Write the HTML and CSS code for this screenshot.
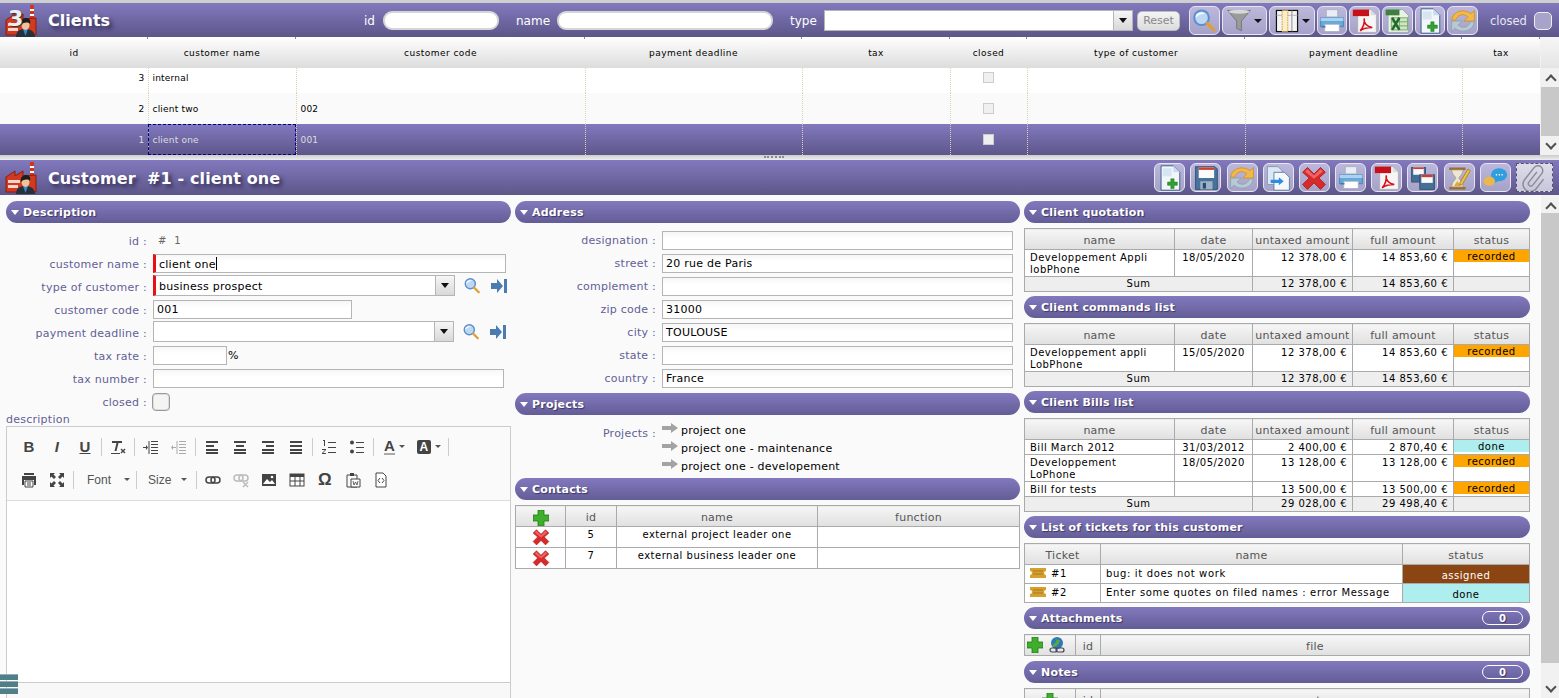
FILE: index.html
```html
<!DOCTYPE html>
<html lang="en">
<head>
  <meta charset="UTF-8" />
  <title>Clients</title>
  <link rel="stylesheet" href="styles.css">
</head>
<body>

<svg class="defs" xmlns="http://www.w3.org/2000/svg">
  <symbol id="i-factory" viewBox="0 0 32 32">
    <rect x="25" y="0" width="4" height="18" fill="#d8321f"/>
    <rect x="25" y="4" width="4" height="2" fill="#fff"/>
    <rect x="25" y="9" width="4" height="2" fill="#fff"/>
    <path d="M1 15l9-6v5l8-5v5l13-1v17H1z" fill="#cf3a22" stroke="#8e1d0e"/>
    <path d="M3 18h12v3H3zM3 23h10v3H3z" fill="#f6d4c8"/>
    <path d="M11 32c0-6 4-8 9-8s10 2 10 8z" fill="#24303c"/>
    <path d="M18 24l2.500 7 2.500-7z" fill="#3c86c8"/>
    <ellipse cx="20.500" cy="20" rx="4" ry="5" fill="#eec29c"/>
    <path d="M16 20c-1-5 2-7 5-7s5 2 4 6c-2-2-6-2-9 1z" fill="#1d1d1d"/>
  </symbol>
  <symbol id="i-search" viewBox="0 0 32 32">
    <circle cx="13" cy="12" r="9" fill="#bcd8f2" stroke="#5b8fd0" stroke-width="2.500"/>
    <path d="M6 9c3-4 8-4 11-2-4 0-8 1-11 5z" fill="#fff"/>
    <path d="M20 19l8 8" stroke="#e0a030" stroke-width="4" stroke-linecap="round"/>
  </symbol>
  <symbol id="i-funnel" viewBox="0 0 32 32">
    <path d="M2 3h28L19 16v12l-6-3v-9z" fill="#9a9a9a" stroke="#6f6f6f"/>
    <ellipse cx="16" cy="4.500" rx="13" ry="2.500" fill="#d8d8d8"/>
  </symbol>
  <symbol id="i-cols" viewBox="0 0 32 32">
    <rect x="3" y="3" width="26" height="26" fill="#f4f4f4" stroke="#111" stroke-width="1.500"/>
    <path d="M22 3v26" stroke="#777"/>
    <path d="M3 9h26" stroke="#aaa"/>
    <rect x="10" y="3" width="7" height="26" fill="#fbeecb" stroke="#d08a18" stroke-dasharray="2 1"/>
  </symbol>
  <symbol id="i-print" viewBox="0 0 32 32">
    <path d="M9 2h14v9H9z" fill="#e8eef4" stroke="#aab"/>
    <path d="M2 12h28v11H2z" fill="#67a9da" stroke="#3f7fb2"/>
    <path d="M2 12h28v4H2z" fill="#a9d3ef"/>
    <path d="M7 20h18v9H7z" fill="#fff" stroke="#aab"/>
    <path d="M3 24h5v-2H3z" fill="#3f7fb2"/>
  </symbol>
  <symbol id="i-pdf" viewBox="0 0 32 32">
    <path d="M7 2h16l7 7v21H7z" fill="#f6f6f6" stroke="#aaa"/>
    <path d="M23 2v7h7z" fill="#ddd"/>
    <rect x="1" y="2" width="20" height="8" fill="#c8101a"/>
    <path d="M10 28c4-4 6-11 5-15-1 5 3 10 10 11-6 0-11 1-15 4z" fill="none" stroke="#d8101a" stroke-width="2"/>
  </symbol>
  <symbol id="i-excel" viewBox="0 0 32 32">
    <path d="M5 2h18l7 7v21H5z" fill="#e9f2e4" stroke="#8aa"/>
    <rect x="2" y="2" width="17" height="7" fill="#3f7f3f"/>
    <path d="M9 12h20v15H9zM9 17h20M9 22h20M19 12v15" fill="#cfe5c3" stroke="#6a9d5c"/>
    <path d="M10 12l9 15M19 12l-9 15" stroke="#1f6a2c" stroke-width="3"/>
  </symbol>
  <symbol id="i-new" viewBox="0 0 32 32">
    <path d="M5 1h15l8 8v22H5z" fill="#f2f6fb" stroke="#1f4a78"/>
    <path d="M20 1v8h8z" fill="#c9dbee"/>
    <path d="M7 4h11v10H7z" fill="#d9e4f2"/>
    <path d="M17 17h4v4h4v4h-4v4h-4v-4h-4v-4h4z" fill="#2fa32f" stroke="#1c6e1c" stroke-width=".6"/>
  </symbol>
  <symbol id="i-refresh" viewBox="0 0 32 32">
    <path d="M2 15C3 4 17 0 26 7l4-4v13H17l5-5c-5-5-13-3-15 4z" fill="#f2b94a" stroke="#d08f1f"/>
    <path d="M30 17c-1 11-15 15-24 8l-4 4V16h13l-5 5c5 5 13 3 15-4z" fill="#b8c8d4" stroke="#8da0ae"/>
  </symbol>
  <symbol id="i-save" viewBox="0 0 32 32">
    <path d="M3 2h24l3 3v25H3z" fill="#48729a" stroke="#2c4c6c"/>
    <rect x="7" y="3" width="19" height="13" fill="#fafafa"/>
    <rect x="7" y="3" width="19" height="3" fill="#d23b30"/>
    <rect x="9" y="20" width="15" height="10" fill="#9fb3c6"/>
    <rect x="12" y="22" width="4" height="7" fill="#2c4c6c"/>
  </symbol>
  <symbol id="i-copy" viewBox="0 0 32 32">
    <path d="M3 2h13l5 5v17H3z" fill="#dce8f4" stroke="#7a92ad"/>
    <path d="M11 9h13l6 6v16H11z" fill="#f6f9fc" stroke="#4c6e96"/>
    <path d="M7 18h10v-3l6 5-6 5v-3H7z" fill="#2a8fe0"/>
  </symbol>
  <symbol id="i-del" viewBox="0 0 32 32">
    <path d="M8 3l8 8 8-8 6 6-8 7 8 8-6 6-8-8-8 8-6-6 8-8-8-7z" fill="#d92a2a" stroke="#a81818"/>
    <path d="M8 5l8 8 8-8 3 3-11 9-11-9z" fill="#ee6464"/>
  </symbol>
  <symbol id="i-multi" viewBox="0 0 32 32">
    <rect x="2" y="3" width="17" height="18" fill="#476f96" stroke="#2c4c6c"/>
    <rect x="4" y="3" width="13" height="9" fill="#fafafa"/>
    <rect x="4" y="3" width="13" height="2" fill="#d23b30"/>
    <rect x="12" y="12" width="18" height="18" fill="#476f96" stroke="#2c4c6c"/>
    <rect x="14" y="12" width="14" height="10" fill="#fafafa"/>
    <rect x="14" y="12" width="14" height="3" fill="#d23b30"/>
  </symbol>
  <symbol id="i-glass" viewBox="0 0 32 32">
    <path d="M4 3h20v3H4zM4 27h20v3H4z" fill="#a06a2a"/>
    <path d="M7 6h14c0 6-5 8-5 10s5 4 5 11H7c0-7 5-9 5-11S7 12 7 6z" fill="#efe6d2" stroke="#998"/>
    <path d="M10 26c1-3 4-5 4-7 0 2 3 4 4 7z" fill="#d8a84a"/>
    <path d="M27 5l3 2-10 17-3 1 0-3z" fill="#f0c040" stroke="#a87a1a"/>
  </symbol>
  <symbol id="i-chat" viewBox="0 0 32 32">
    <ellipse cx="21" cy="12" rx="10" ry="8" fill="#2f9ede"/>
    <path d="M15 18l-2 5 7-3z" fill="#2f9ede"/>
    <ellipse cx="9" cy="20" rx="7" ry="5.500" fill="#eeb74c"/>
    <path d="M17 12h1.500M20.500 12h1.500M24 12h1.500" stroke="#fff" stroke-width="2"/>
  </symbol>
  <symbol id="i-clip" viewBox="0 0 32 32">
    <path d="M-2-8V8a3 3 0 006 0V-10a6 6 0 00-12 0V9a9 9 0 0018 0V-6" transform="translate(15 16) rotate(38)" fill="none" stroke="#8c8c96" stroke-width="1.800"/>
  </symbol>
  <symbol id="i-goto" viewBox="0 0 16 14">
    <path d="M0 4h6V0l6 7-6 7v-4H0z" fill="#4a7cb0"/>
    <rect x="13" y="0" width="3" height="14" fill="#4a7cb0"/>
  </symbol>
  <symbol id="i-arrow" viewBox="0 0 16 10">
    <path d="M0 3h9V0l7 5-7 5V7H0z" fill="#a3a3a3"/>
  </symbol>
  <symbol id="i-plus" viewBox="0 0 16 16">
    <path d="M5 0h6v5h5v6h-5v5H5v-5H0V5h5z" fill="#3fae2a" stroke="#1f7a18" stroke-width=".8"/>
  </symbol>
  <symbol id="i-ticket" viewBox="0 0 16 10">
    <path d="M0 0h16v3a2 2 0 000 4v3H0V7a2 2 0 000-4z" fill="#d5a02e"/>
    <path d="M3 3h10M3 6h10" stroke="#a97a1c"/>
  </symbol>
  <symbol id="i-globe" viewBox="0 0 16 16">
    <circle cx="8" cy="6" r="6" fill="#2d78b8"/>
    <path d="M5 2c3 0 3 3 1 4S3 8 4 10c4 0 6-3 7-7z" fill="#5aa83c"/>
    <rect x="1" y="11" width="7" height="4" rx="2" fill="none" stroke="#445" stroke-width="1.200"/>
    <rect x="7" y="11" width="8" height="4" rx="2" fill="none" stroke="#445" stroke-width="1.200"/>
  </symbol>
  <symbol id="e-clear" viewBox="0 0 16 16">
    <path d="M2 2h10v2H8.500L6.500 12H4.500L6.500 4H2zM1 14h9v1H1z" fill="#444"/>
    <path d="M11 10l4 4M15 10l-4 4" stroke="#444" stroke-width="1.400"/>
  </symbol>
  <symbol id="e-indent" viewBox="0 0 16 16">
    <path d="M8 2h7v1H8zM8 5h7v1H8zM8 8h7v1H8zM8 11h7v1H8zM8 14h7v1H8z" fill="#444"/>
    <path d="M6 2v13" stroke="#444"/>
    <path d="M0 8h3V6l2 2.500L3 11V9H0z" fill="#444"/>
  </symbol>
  <symbol id="e-outdent" viewBox="0 0 16 16">
    <path d="M8 2h7v1H8zM8 5h7v1H8zM8 8h7v1H8zM8 11h7v1H8zM8 14h7v1H8z" fill="#aaa"/>
    <path d="M6 2v13" stroke="#aaa"/>
    <path d="M5 8H2V6L0 8.500 2 11V9h3z" fill="#aaa"/>
  </symbol>
  <symbol id="e-left" viewBox="0 0 16 16"><path d="M2 2h12v2H2zM2 6h8v2H2zM2 10h12v2H2zM2 13h12v2H2z" fill="#444"/></symbol>
  <symbol id="e-center" viewBox="0 0 16 16"><path d="M2 2h12v2H2zM4 6h8v2H4zM2 10h12v2H2zM2 13h12v2H2z" fill="#444"/></symbol>
  <symbol id="e-right" viewBox="0 0 16 16"><path d="M2 2h12v2H2zM6 6h8v2H6zM2 10h12v2H2zM2 13h12v2H2z" fill="#444"/></symbol>
  <symbol id="e-just" viewBox="0 0 16 16"><path d="M2 2h12v2H2zM2 6h12v2H2zM2 10h12v2H2zM2 13h12v2H2z" fill="#444"/></symbol>
  <symbol id="e-ol" viewBox="0 0 16 16">
    <path d="M7 3h8v1H7zM7 8h8v1H7zM7 13h8v1H7z" fill="#444"/>
    <path d="M2 1h2v6H3V2H2zM1 10h4v1L2 14h3v1H1v-1l3-3H1z" fill="#444"/>
  </symbol>
  <symbol id="e-ul" viewBox="0 0 16 16">
    <path d="M7 3h8v1H7zM7 8h8v1H7zM7 13h8v1H7z" fill="#444"/>
    <circle cx="3" cy="3.500" r="2" fill="#444"/><circle cx="3" cy="12.500" r="2" fill="#444"/>
  </symbol>
  <symbol id="e-print" viewBox="0 0 16 16">
    <path d="M3 1h10v2H3zM1 4h14v9h-2V8H3v5H1z" fill="#444"/>
    <path d="M4 9h8v6H4zM6 11h4M6 13h4" fill="#fff" stroke="#444"/>
  </symbol>
  <symbol id="e-max" viewBox="0 0 16 16">
    <path d="M1 1h5L4.500 2.500 7 5 5 7 2.500 4.500 1 6zM15 1v5L13.500 4.500 11 7 9 5l2.500-2.500L10 1zM1 15v-5l1.500 1.500L5 9l2 2-2.500 2.500L6 15zM15 15h-5l1.500-1.500L9 11l2-2 2.500 2.500L15 10z" fill="#444"/>
  </symbol>
  <symbol id="e-link" viewBox="0 0 16 16">
    <rect x="1" y="5" width="9" height="6" rx="3" fill="none" stroke="#444" stroke-width="1.500"/>
    <rect x="6" y="5" width="9" height="6" rx="3" fill="none" stroke="#444" stroke-width="1.500"/>
  </symbol>
  <symbol id="e-unlink" viewBox="0 0 16 16">
    <rect x="1" y="3" width="9" height="6" rx="3" fill="none" stroke="#bbb" stroke-width="1.500"/>
    <rect x="6" y="3" width="9" height="6" rx="3" fill="none" stroke="#bbb" stroke-width="1.500"/>
    <path d="M10 10l5 5M15 10l-5 5" stroke="#bbb" stroke-width="1.500"/>
  </symbol>
  <symbol id="e-image" viewBox="0 0 16 16">
    <rect x="1" y="2" width="14" height="12" fill="#444"/>
    <path d="M2 12l4-5 3 3 2-2 3 4z" fill="#fff"/>
    <circle cx="11" cy="5" r="1.300" fill="#fff"/>
  </symbol>
  <symbol id="e-table" viewBox="0 0 16 16">
    <rect x="1" y="2" width="14" height="12" fill="#fff" stroke="#444"/>
    <path d="M1 2h14v3H1z" fill="#444"/>
    <path d="M1 9h14M6 2v12M11 2v12" stroke="#444"/>
  </symbol>
  <symbol id="e-paste" viewBox="0 0 16 16">
    <path d="M2 3h10v12H2z" fill="none" stroke="#444"/>
    <rect x="5" y="1" width="4" height="3" fill="#444"/>
    <path d="M6 7h9v8H6z" fill="#fff" stroke="#444"/>
    <path d="M8 9l1 4 1.500-3 1.500 3 1-4" fill="none" stroke="#444" stroke-width=".8"/>
  </symbol>
  <symbol id="e-source" viewBox="0 0 16 16">
    <path d="M3 1h7l3 3v11H3z" fill="#fff" stroke="#444"/>
    <path d="M7 6L5 8.500 7 11M9 6l2 2.500L9 11" fill="none" stroke="#444"/>
  </symbol>
</svg>

<header class="title-bar list-bar">
  <svg class="logo"><use href="#i-factory"/></svg>
  <span class="logo-count">3</span>
  <h1 class="title title-list">Clients</h1>

  <div class="search">
    <label class="search-id">id</label>
    <input class="pill pill-id" type="text">
    <label class="search-name">name</label>
    <input class="pill pill-name" type="text">
    <label class="search-type">type</label>
    <div class="combo combo-type"><span class="combo-text"></span><span class="combo-btn"></span></div>
    <button class="reset">Reset</button>
  </div>

  <div class="tools tools-list">
    <button class="tool"><svg><use href="#i-search"/></svg></button>
    <button class="tool tool-wide"><svg><use href="#i-funnel"/></svg><i class="caret"></i></button>
    <button class="tool tool-wide"><svg><use href="#i-cols"/></svg><i class="caret"></i></button>
    <button class="tool"><svg><use href="#i-print"/></svg></button>
    <button class="tool"><svg><use href="#i-pdf"/></svg></button>
    <button class="tool"><svg><use href="#i-excel"/></svg></button>
    <button class="tool"><svg><use href="#i-new"/></svg></button>
    <button class="tool"><svg><use href="#i-refresh"/></svg></button>
  </div>
  <span class="closed-label">closed</span>
  <span class="closed-box"></span>
</header>

<section class="grid-wrap">
  <div class="grid">
    <table>
      <colgroup>
        <col style="width:148px"><col style="width:148px"><col style="width:289px"><col style="width:217px"><col style="width:148px"><col style="width:77px"><col style="width:218px"><col style="width:217px"><col style="width:78px">
      </colgroup>
      <thead>
        <tr>
          <th>id</th><th>customer name</th><th>customer code</th><th>payment deadline</th><th>tax</th><th>closed</th><th>type of customer</th><th>payment deadline</th><th>tax</th>
        </tr>
      </thead>
      <tbody>
        <tr class="row-first">
          <td class="num">3</td><td>internal</td><td></td><td></td><td></td><td class="chk"><span></span></td><td></td><td></td><td></td>
        </tr>
        <tr class="row-even">
          <td class="num">2</td><td>client two</td><td>002</td><td></td><td></td><td class="chk"><span></span></td><td></td><td></td><td></td>
        </tr>
        <tr class="row-selected">
          <td class="num">1</td><td class="focus">client one</td><td>001</td><td></td><td></td><td class="chk"><span></span></td><td></td><td></td><td></td>
        </tr>
      </tbody>
    </table>
  </div>
  <div class="scroll scroll-grid">
    <span class="scroll-head"></span>
    <span class="scroll-up"></span>
    <span class="scroll-thumb"></span>
    <span class="scroll-down"></span>
  </div>
</section>

<div class="splitter"><span></span></div>

<header class="title-bar detail-bar">
  <svg class="logo"><use href="#i-factory"/></svg>
  <h1 class="title">Customer &nbsp;#1 - client one</h1>
  <div class="tools tools-detail">
    <button class="tool"><svg><use href="#i-new"/></svg></button>
    <button class="tool"><svg><use href="#i-save"/></svg></button>
    <button class="tool"><svg><use href="#i-refresh"/></svg></button>
    <button class="tool"><svg><use href="#i-copy"/></svg></button>
    <button class="tool"><svg><use href="#i-del"/></svg></button>
    <button class="tool"><svg><use href="#i-print"/></svg></button>
    <button class="tool"><svg><use href="#i-pdf"/></svg></button>
    <button class="tool"><svg><use href="#i-multi"/></svg></button>
    <button class="tool"><svg><use href="#i-glass"/></svg></button>
    <button class="tool"><svg><use href="#i-chat"/></svg></button>
    <button class="tool tool-attach"><svg><use href="#i-clip"/></svg></button>
  </div>
</header>

<main class="detail">
  <div class="columns">

    <div class="col">
      <div class="sec">
        <h2 class="bar">Description</h2>
        <div class="form">
          <div class="row"><label>id :</label><span class="id-val"># &nbsp;1</span></div>
          <div class="row"><label>customer name :</label><div class="field req f-name">client one<i class="cursor"></i></div></div>
          <div class="row"><label>type of customer :</label>
            <div class="combo req f-type"><span class="combo-text">business prospect</span><span class="combo-btn"></span></div>
            <svg class="mini"><use href="#i-search"/></svg><svg class="mini-go"><use href="#i-goto"/></svg>
          </div>
          <div class="row"><label>customer code :</label><div class="field f-code">001</div></div>
          <div class="row"><label>payment deadline :</label>
            <div class="combo f-deadline"><span class="combo-text"></span><span class="combo-btn"></span></div>
            <svg class="mini"><use href="#i-search"/></svg><svg class="mini-go"><use href="#i-goto"/></svg>
          </div>
          <div class="row"><label>tax rate :</label><div class="field f-rate"></div><span class="pct">%</span></div>
          <div class="row"><label>tax number :</label><div class="field f-number"></div></div>
          <div class="row"><label>closed :</label><span class="box"></span></div>
        </div>
        <div class="desc-label">description</div>
        <div class="editor">
          <div class="ed-tools">
            <div class="ed-row">
              <b class="ed-btn ed-b">B</b><i class="ed-btn ed-i">I</i><u class="ed-btn ed-u">U</u><span class="sep"></span>
              <span class="ed-btn"><svg><use href="#e-clear"/></svg></span><span class="sep"></span>
              <span class="ed-btn"><svg><use href="#e-indent"/></svg></span><span class="ed-btn"><svg><use href="#e-outdent"/></svg></span><span class="sep"></span>
              <span class="ed-btn"><svg><use href="#e-left"/></svg></span><span class="ed-btn"><svg><use href="#e-center"/></svg></span><span class="ed-btn"><svg><use href="#e-right"/></svg></span><span class="ed-btn"><svg><use href="#e-just"/></svg></span><span class="sep"></span>
              <span class="ed-btn"><svg><use href="#e-ol"/></svg></span><span class="ed-btn"><svg><use href="#e-ul"/></svg></span><span class="sep"></span>
              <span class="ed-color"><b class="ed-a">A</b><i class="caret-sm"></i></span>
              <span class="ed-color"><b class="ed-a2">A</b><i class="caret-sm"></i></span><span class="sep"></span>
            </div>
            <div class="ed-row">
              <span class="ed-btn"><svg><use href="#e-print"/></svg></span><span class="ed-btn"><svg><use href="#e-max"/></svg></span><span class="sep"></span>
              <span class="ed-drop ed-font">Font<i class="caret-sm"></i></span><span class="sep"></span>
              <span class="ed-drop ed-size">Size<i class="caret-sm"></i></span><span class="sep"></span>
              <span class="ed-btn"><svg><use href="#e-link"/></svg></span><span class="ed-btn"><svg><use href="#e-unlink"/></svg></span><span class="ed-btn"><svg><use href="#e-image"/></svg></span><span class="ed-btn"><svg><use href="#e-table"/></svg></span><span class="ed-btn ed-omega">Ω</span><span class="ed-btn"><svg><use href="#e-paste"/></svg></span><span class="ed-btn"><svg><use href="#e-source"/></svg></span>
            </div>
          </div>
          <div class="ed-body"></div>
          <div class="ed-foot"></div>
        </div>
      </div>
    </div>

    <div class="col">
      <div class="sec sec-address">
        <h2 class="bar">Address</h2>
        <div class="form">
          <div class="row"><label>designation :</label><div class="field f-addr"></div></div>
          <div class="row"><label>street :</label><div class="field f-addr">20 rue de Paris</div></div>
          <div class="row"><label>complement :</label><div class="field f-addr"></div></div>
          <div class="row"><label>zip code :</label><div class="field f-addr">31000</div></div>
          <div class="row"><label>city :</label><div class="field f-addr">TOULOUSE</div></div>
          <div class="row"><label>state :</label><div class="field f-addr"></div></div>
          <div class="row"><label>country :</label><div class="field f-addr">France</div></div>
        </div>
      </div>
      <div class="sec sec-projects">
        <h2 class="bar">Projects</h2>
        <div class="projects">
          <label>Projects :</label>
          <ul>
            <li><svg><use href="#i-arrow"/></svg>project one</li>
            <li><svg><use href="#i-arrow"/></svg>project one - maintenance</li>
            <li><svg><use href="#i-arrow"/></svg>project one - developement</li>
          </ul>
        </div>
      </div>
      <div class="sec">
        <h2 class="bar">Contacts</h2>
        <table class="tbl tbl-contacts">
          <colgroup><col style="width:50px"><col style="width:51px"><col style="width:201px"><col></colgroup>
          <tr><th><svg class="ic16"><use href="#i-plus"/></svg></th><th>id</th><th>name</th><th>function</th></tr>
          <tr><td class="c"><svg class="ic18"><use href="#i-del"/></svg></td><td class="c">5</td><td class="c">external project leader one</td><td></td></tr>
          <tr><td class="c"><svg class="ic18"><use href="#i-del"/></svg></td><td class="c">7</td><td class="c">external business leader one</td><td></td></tr>
        </table>
      </div>
    </div>

    <div class="col">
      <div class="sec">
        <h2 class="bar">Client quotation</h2>
        <table class="tbl tbl-money">
          <colgroup><col style="width:150px"><col style="width:78px"><col style="width:100px"><col style="width:101px"><col></colgroup>
          <tr><th>name</th><th>date</th><th>untaxed amount</th><th>full amount</th><th>status</th></tr>
          <tr class="two"><td>Developpement Appli<br>lobPhone</td><td class="c">18/05/2020</td><td class="r">12 378,00 €</td><td class="r">14 853,60 €</td><td class="st"><span class="recorded">recorded</span></td></tr>
          <tr class="sum"><td colspan="2">Sum</td><td class="r">12 378,00 €</td><td class="r">14 853,60 €</td><td></td></tr>
        </table>
      </div>
      <div class="sec">
        <h2 class="bar">Client commands list</h2>
        <table class="tbl tbl-money">
          <colgroup><col style="width:150px"><col style="width:78px"><col style="width:100px"><col style="width:101px"><col></colgroup>
          <tr><th>name</th><th>date</th><th>untaxed amount</th><th>full amount</th><th>status</th></tr>
          <tr class="two"><td>Developpement appli<br>LobPhone</td><td class="c">15/05/2020</td><td class="r">12 378,00 €</td><td class="r">14 853,60 €</td><td class="st"><span class="recorded">recorded</span></td></tr>
          <tr class="sum"><td colspan="2">Sum</td><td class="r">12 378,00 €</td><td class="r">14 853,60 €</td><td></td></tr>
        </table>
      </div>
      <div class="sec">
        <h2 class="bar">Client Bills list</h2>
        <table class="tbl tbl-money">
          <colgroup><col style="width:150px"><col style="width:78px"><col style="width:100px"><col style="width:101px"><col></colgroup>
          <tr><th>name</th><th>date</th><th>untaxed amount</th><th>full amount</th><th>status</th></tr>
          <tr class="one"><td>Bill March 2012</td><td class="c">31/03/2012</td><td class="r">2 400,00 €</td><td class="r">2 870,40 €</td><td class="st"><span class="done">done</span></td></tr>
          <tr class="two"><td>Developpement<br>LoPhone</td><td class="c">18/05/2020</td><td class="r">13 128,00 €</td><td class="r">13 128,00 €</td><td class="st"><span class="recorded">recorded</span></td></tr>
          <tr class="one"><td>Bill for tests</td><td></td><td class="r">13 500,00 €</td><td class="r">13 500,00 €</td><td class="st"><span class="recorded">recorded</span></td></tr>
          <tr class="sum"><td colspan="2">Sum</td><td class="r">29 028,00 €</td><td class="r">29 498,40 €</td><td></td></tr>
        </table>
      </div>
      <div class="sec">
        <h2 class="bar">List of tickets for this customer</h2>
        <table class="tbl tbl-tickets">
          <colgroup><col style="width:76px"><col style="width:302px"><col></colgroup>
          <tr><th>Ticket</th><th>name</th><th>status</th></tr>
          <tr><td class="tk"><svg><use href="#i-ticket"/></svg>#1</td><td>bug: it does not work</td><td class="state assigned">assigned</td></tr>
          <tr><td class="tk"><svg><use href="#i-ticket"/></svg>#2</td><td>Enter some quotes on filed names : error Message</td><td class="state done">done</td></tr>
        </table>
      </div>
      <div class="sec sec-attach">
        <h2 class="bar">Attachments<span class="count">0</span></h2>
        <table class="tbl tbl-attach">
          <colgroup><col style="width:51px"><col style="width:25px"><col></colgroup>
          <tr><th class="adds"><svg class="ic16"><use href="#i-plus"/></svg><svg class="ic16"><use href="#i-globe"/></svg></th><th>id</th><th>file</th></tr>
        </table>
      </div>
      <div class="sec">
        <h2 class="bar">Notes<span class="count">0</span></h2>
        <table class="tbl tbl-attach">
          <colgroup><col style="width:51px"><col style="width:25px"><col></colgroup>
          <tr><th><svg class="ic16"><use href="#i-plus"/></svg></th><th>id</th><th>note</th></tr>
        </table>
      </div>
    </div>

  </div>
  <div class="scroll scroll-main">
    <span class="scroll-up"></span>
    <span class="scroll-thumb"></span>
    <span class="scroll-down"></span>
  </div>
</main>

<div class="menu-handle"><span></span><span></span><span></span></div>

</body>
</html>
```

FILE: styles.css
```css
* {
  box-sizing: border-box;
}

html, body {
  height: 100%;
}

body {
  margin: 0;
  overflow: hidden;
  display: flex;
  flex-direction: column;
  position: relative;
  background: #fafafa;
  font-family: "DejaVu Sans", Verdana, sans-serif;
  font-size: 11px;
  letter-spacing: .25px;
  color: #000;
}

.defs {
  position: absolute;
  width: 0;
  height: 0;
}

/* title bars */
.title-bar {
  display: flex;
  align-items: center;
  flex: none;
  position: relative;
  background: linear-gradient(#8279be, #5d5689);
}

.list-bar {
  height: 37px;
  padding-top: 1px;
  border-top: 3px solid #cfcfcf;
}

.detail-bar {
  height: 35px;
}

.logo {
  width: 32px;
  height: 32px;
  margin-left: 5px;
  flex: none;
}

.logo-count {
  position: absolute;
  left: 8px;
  top: 3px;
  font-size: 22px;
  font-weight: bold;
  color: #eee;
  text-shadow: 1px 1px 1px #333;
}

.title {
  margin: 2px 0 0 11px;
  font-size: 16px;
  font-weight: bold;
  color: #fff;
  white-space: nowrap;
  letter-spacing: .12px;
  text-shadow: 3px 3px 4px #2f2a55;
}

.title-list {
  width: 62px;
  margin-top: 0;
  letter-spacing: 0;
}

.search {
  display: flex;
  align-items: center;
  margin-left: 254px;
  color: #fff;
  font-size: 12px;
  letter-spacing: 0;
}

.search label {
  white-space: nowrap;
}

.search-id {
  width: 19px;
}

.pill {
  height: 19px;
  border: 2px solid #d5d5d5;
  border-radius: 9px;
  background: #fff;
  outline: none;
}

.pill-id {
  width: 116px;
  margin-right: 17px;
}

.search-name {
  width: 41px;
}

.pill-name {
  width: 216px;
  margin-right: 17px;
}

.search-type {
  width: 34px;
}

.combo {
  display: flex;
  height: 21px;
  border: 1px solid #b5b5b5;
  background: #fff;
}

.row .combo {
  margin-bottom: 2px;
}

.combo-type {
  width: 309px;
}

.combo-text {
  flex: 1;
  padding: 4px 0 0 3px;
}

.combo-btn {
  flex: none;
  width: 19px;
  border-left: 1px solid #b5b5b5;
  background: linear-gradient(#f6f6f6, #d8d8d8);
  position: relative;
}

.combo-btn::after {
  content: "";
  position: absolute;
  left: 5px;
  top: 7px;
  border: 4px solid transparent;
  border-top: 5px solid #111;
  border-bottom: 0;
}

.reset {
  width: 43px;
  height: 20px;
  margin-left: 4px;
  padding: 0;
  border: 1px solid #bbb;
  border-radius: 5px;
  background: linear-gradient(#f4f4f4, #dcdcdc);
  color: #888;
  font: 11px "DejaVu Sans", Verdana, sans-serif;
}

.tools {
  display: flex;
  flex: none;
}

.tools-list {
  gap: 2px;
  margin-left: 9px;
}

.tools-list .tool {
  width: 30.67px;
}

.tools-list .tool-wide {
  width: 45.5px;
}

.tools-detail {
  gap: 5.2px;
  margin-left: auto;
  margin-right: 6px;
}

.tool {
  display: flex;
  align-items: center;
  justify-content: center;
  width: 31px;
  height: 29px;
  padding: 0;
  border: 1px solid #e6e6f0;
  border-radius: 6px;
  background: linear-gradient(#bcb8dc, #a5a1c8);
}

.tool svg {
  width: 26px;
  height: 26px;
  flex: none;
}

.tool-attach {
  width: 37px;
  border: 1px dashed #55526f;
  border-radius: 0;
  background: linear-gradient(#dcdcea, #c9c6dc);
}

.caret {
  margin-left: 2px;
  border: 4px solid transparent;
  border-top: 4px solid #111;
  border-bottom: 0;
}

.closed-label {
  margin-left: 12px;
  color: #e6e6f4;
  font-size: 11.5px;
  letter-spacing: 0;
}

.closed-box {
  width: 18px;
  height: 18px;
  margin-left: 7px;
  border: 1px solid #eee;
  border-radius: 5px;
  background: #a7a3ca;
}

/* list grid */
.grid-wrap {
  display: flex;
  flex: none;
  height: 118px;
  background: #fff;
}

.grid {
  width: 1540px;
  flex: none;
}

.grid table {
  width: 1540px;
  table-layout: fixed;
  border-collapse: collapse;
}

.grid th {
  height: 31px;
  padding: 0;
  position: relative;
  background: linear-gradient(#fff, #dcdcdc);
  font-size: 9px;
  font-weight: normal;
  letter-spacing: .45px;
}

.grid th::after {
  content: "";
  position: absolute;
  right: 0;
  top: 0;
  width: 1px;
  height: 2px;
  background: #888;
}

.grid td {
  padding: 0 4px;
  font-size: 9px;
  border-right: 1px dotted #ddd0b4;
  letter-spacing: .2px;
  white-space: nowrap;
}

.grid td:last-child {
  border-right: 0;
}

.row-first td {
  height: 25px;
  padding-bottom: 6px;
}

.row-even td {
  height: 31px;
  background: #fafafa;
}

.row-selected td {
  height: 31px;
  background: linear-gradient(#8279be, #5d5689);
  color: #ddd;
}

.grid .num {
  text-align: right;
  padding-right: 3px;
}

.grid .focus {
  outline: 1px dashed #00008b;
  outline-offset: -1px;
}

.chk {
  text-align: center;
}

.chk span {
  display: inline-block;
  width: 11px;
  height: 11px;
  vertical-align: middle;
  border: 1px solid #ccc;
  background: #f0f0f0;
}

.row-selected .chk span {
  background: #eee;
}

/* fake scrollbars */
.scroll {
  display: flex;
  flex-direction: column;
  flex: none;
  width: 19px;
  background: #f1f1f1;
}

.scroll-grid {
  padding-left: 1px;
}

.scroll-head {
  height: 31px;
  background: linear-gradient(#f6f6f6, #e4e4e4);
}

.scroll-up,
.scroll-down {
  height: 19px;
  flex: none;
  position: relative;
}

.scroll-up::after,
.scroll-down::after {
  content: "";
  position: absolute;
  left: 6px;
  width: 6px;
  height: 6px;
  border-left: 2px solid #505050;
  border-top: 2px solid #505050;
}

.scroll-up::after {
  top: 8px;
  transform: rotate(45deg);
}

.scroll-down::after {
  top: 4px;
  transform: rotate(225deg);
}

.scroll-thumb {
  flex: 1;
  background: #c8c8c8;
}

.splitter {
  flex: none;
  height: 5px;
  display: flex;
  justify-content: center;
  background: linear-gradient(#ccc, #eee);
}

.splitter span {
  width: 20px;
  height: 2px;
  margin: 1px 12px 0 0;
  border-top: 2px dotted #8a8a8a;
}

/* detail */
.detail {
  flex: 1;
  display: flex;
  min-height: 0;
  overflow: hidden;
}

.columns {
  display: flex;
  gap: 4px;
  width: 1540px;
  padding: 6px 0 0 6px;
  flex: none;
}

.col {
  width: 505px;
  flex: none;
}

.col:last-child {
  width: 506px;
}

.sec {
  margin-bottom: 4px;
}

.bar {
  display: flex;
  align-items: center;
  height: 22px;
  margin: 0 0 5px;
  padding-left: 17px;
  border-radius: 11px;
  position: relative;
  background: linear-gradient(#8279be, #635d96);
  color: #fff;
  font-size: 11px;
  font-weight: bold;
  text-shadow: 1px 1px 1px #3a3566;
  letter-spacing: .2px;
}

.bar::before {
  content: "";
  position: absolute;
  left: 5px;
  top: 9px;
  border: 4px solid transparent;
  border-top: 5px solid #fff;
  border-bottom: 0;
}

.count {
  display: flex;
  align-items: center;
  justify-content: center;
  width: 41px;
  height: 14px;
  margin-left: auto;
  margin-right: 7px;
  border: 1px solid #fff;
  border-radius: 7px;
  font-size: 10px;
}

.form {
  padding-top: 0;
  margin-top: 6px;
}

.row {
  display: flex;
  align-items: center;
  height: 23px;
}

.row label {
  width: 141px;
  margin-right: 6px;
  padding-top: 2px;
  text-align: right;
  color: #625f96;
  white-space: nowrap;
  flex: none;
}

.sec-address .row label {
  padding-top: 0;
}

.id-val {
  margin-left: 5px;
  color: #666;
  font-size: 10px;
  letter-spacing: .5px;
}

.field {
  height: 19px;
  padding: 2px 5px 0 3px;
  border: 1px solid #b5b5b5;
  background: linear-gradient(#f6f6f6, #fff 40%);
  white-space: nowrap;
}

.req {
  border-left: 3px solid #e81010;
}

.f-name {
  width: 353px;
}

.cursor {
  display: inline-block;
  width: 1px;
  height: 13px;
  vertical-align: -2px;
  background: #000;
}

.f-type {
  width: 302px;
}

.f-code {
  width: 199px;
}

.f-deadline {
  width: 301px;
}

.f-rate {
  width: 74px;
}

.f-number {
  width: 351px;
}

.f-addr {
  width: 351px;
}

.pct {
  margin-left: 1px;
}

.mini {
  width: 18px;
  height: 18px;
  margin: 0 0 2px 8px;
}

.mini-go {
  width: 16px;
  height: 14px;
  margin: 0 0 2px 10px;
}

.box {
  width: 18px;
  height: 18px;
  margin-left: -1px;
  border: 1px solid #999;
  border-radius: 4px;
  background: #f4f4f4;
  box-shadow: inset 0 0 0 1px #ddd;
}

.desc-label {
  height: 13px;
  line-height: 13px;
  color: #625f96;
}

/* editor */
.editor {
  border: 1px solid #ccc;
  width: 505px;
}

.ed-tools {
  height: 74px;
  padding: 3px 0 0 8px;
  background: #fafafa;
  border-bottom: 1px solid #ddd;
}

.ed-row {
  display: flex;
  align-items: center;
  height: 33px;
}

.ed-btn {
  display: flex;
  align-items: center;
  justify-content: center;
  width: 28px;
  height: 20px;
  color: #444;
  font-size: 15px;
  font-family: "Liberation Sans", sans-serif;
  font-weight: bold;
  flex: none;
}

.ed-btn svg {
  width: 16px;
  height: 16px;
}

.ed-omega {
  font-size: 17px;
}

.sep {
  width: 1px;
  height: 18px;
  margin: 0 2px;
  background: #ccc;
  flex: none;
}

.ed-color {
  display: flex;
  align-items: center;
  width: 36px;
  padding-left: 8px;
  flex: none;
}

.ed-color + .ed-color {
  width: 34px;
  padding-left: 5px;
}

.ed-a {
  color: #444;
  font: bold 15px "Liberation Sans", sans-serif;
  border-bottom: 2px solid #aaa;
  line-height: 14px;
}

.ed-a2 {
  width: 14px;
  height: 14px;
  border-radius: 2px;
  background: #444;
  color: #fff;
  text-align: center;
  font: bold 12px/14px "Liberation Sans", sans-serif;
}

.caret-sm {
  margin-left: 4px;
  border: 3px solid transparent;
  border-top: 3px solid #555;
  border-bottom: 0;
}

.ed-drop {
  display: flex;
  align-items: center;
  justify-content: space-between;
  height: 20px;
  color: #555;
  font-family: "Liberation Sans", sans-serif;
  font-size: 12px;
  letter-spacing: 0;
  flex: none;
}

.ed-font {
  width: 58px;
  padding: 0 4px 0 11px;
}

.ed-size {
  width: 55px;
  padding: 0 7px 0 9px;
}

.ed-body {
  height: 181px;
  background: #fff;
}

.ed-foot {
  height: 20px;
  border-top: 1px solid #ccc;
  background: #f8f8f8;
}

/* tables under the bars */
.tbl {
  width: 100%;
  table-layout: fixed;
  border-collapse: collapse;
  background: #fff;
  font-size: 10px;
  letter-spacing: .5px;
}

.tbl th,
.tbl td {
  border: 1px solid #aaa;
  padding: 0 5px;
  overflow: hidden;
}

.tbl th {
  height: 21px;
  background: linear-gradient(#f6f6f6, #e0e0e0);
  color: #555;
  font-size: 11px;
  font-weight: normal;
  letter-spacing: .25px;
  white-space: nowrap;
  padding: 3px 2px 0;
}

.tbl td {
  vertical-align: top;
  line-height: 12px;
  padding-top: 2px;
}

.tbl .c {
  text-align: center;
  padding-left: 1px;
  padding-right: 1px;
}

.tbl .r {
  text-align: right;
  white-space: nowrap;
  padding-left: 1px;
}

.tbl-contacts tr td {
  height: 21px;
}

.tbl-contacts td:first-child {
  padding: 1px 0 0;
}

.ic16 {
  width: 16px;
  height: 16px;
  vertical-align: middle;
}

.ic18 {
  width: 18px;
  height: 18px;
  display: block;
  margin: 0 auto;
}

.tbl .two td {
  height: 27px;
}

.tbl .one td {
  height: 15px;
}

.tbl .sum td {
  height: 15px;
  padding-top: 1px;
  background: #eee;
  text-align: center;
}

.tbl .sum td.r {
  text-align: right;
}

.tbl .st {
  padding: 0;
  text-align: center;
}

.st span {
  display: block;
  height: 12px;
  line-height: 14px;
}

.recorded {
  background: #ffa500;
}

.tbl td.done,
.st .done {
  background: #afeeee;
}

.tbl-tickets td {
  height: 19px;
  padding-top: 3px;
}

.tk {
  white-space: nowrap;
}

.tk svg {
  width: 16px;
  height: 10px;
  margin-right: 5px;
  vertical-align: -1px;
}

.tbl .state {
  text-align: center;
  vertical-align: middle;
  padding-top: 3px;
}

.tbl .assigned {
  background: #8b4513;
  color: #fff;
}

.tbl-tickets td:nth-child(2) {
  white-space: nowrap;
  letter-spacing: .65px;
}

.sec-attach {
  margin-bottom: 5px;
}

.tbl .adds {
  padding: 0 0 0 2px;
  text-align: left;
}

.adds svg + svg {
  margin-left: 6px;
}

.sec-address {
  margin-bottom: 3px;
}

.sec-projects {
  margin-bottom: 3px;
}

.projects {
  display: flex;
  height: 55px;
}

.projects label {
  width: 141px;
  margin: 7px 6px 0 0;
  text-align: right;
  color: #625f96;
}

.projects ul {
  margin: 0;
  padding: 1px 0 0;
  list-style: none;
}

.projects li {
  display: flex;
  align-items: center;
  height: 18px;
}

.projects svg {
  width: 16px;
  height: 10px;
  margin: -4px 3px 0 0;
}

.scroll-main {
  flex: 1;
  margin-left: 1px;
  padding-top: 5px;
  width: auto;
}

.scroll-main .scroll-up {
  height: 13px;
}

.scroll-main .scroll-up::after {
  top: 4px;
}

.scroll-main .scroll-thumb {
  flex: none;
  height: 450px;
}

.scroll-main .scroll-down {
  margin-top: auto;
}

/* handle sitting over the editor */
.menu-handle {
  position: absolute;
  left: 0;
  top: 674px;
  width: 18px;
}

.menu-handle span {
  display: block;
  height: 6px;
  margin-bottom: 1px;
  background: #4f7f87;
  border-top: 1px solid #9ab;
}
```
